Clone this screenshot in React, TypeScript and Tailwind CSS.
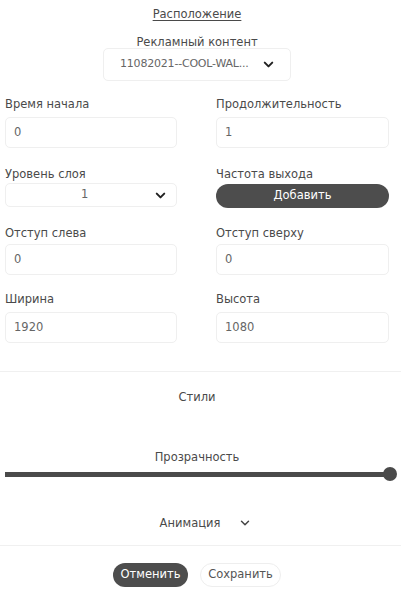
import React from 'react';
import { ChevronDown } from 'lucide-react';

const font = { fontFamily: '"DejaVu Sans", "Noto Sans", sans-serif' };

const Field = ({ label, value, labelGap }: { label: string; value: string; labelGap: string }) => (
  <div className="flex flex-col">
    <span className={`text-[11.5px] leading-4 text-[#4a4a4a] ${labelGap}`}>{label}</span>
    <div className="h-[31px] border border-[#efefef] rounded-[5px] flex items-center pl-[8px] text-[11.5px] text-[#666]">
      {value}
    </div>
  </div>
);

const App: React.FC = () => {
  return (
    <div className="w-[401px] h-[599px] bg-white overflow-hidden" style={font}>
      <div className="w-[394px] flex flex-col items-center">
        <span className="mt-[6px] text-[11.5px] leading-4 text-[#4a4a4a] underline underline-offset-2">Расположение</span>
        <span className="mt-[13px] text-[11.5px] leading-[14px] text-[#4a4a4a]">Рекламный контент</span>
        <div className="mt-[-1px] w-[188px] h-[33px] border border-[#efefef] rounded-[5px] flex items-center pl-[16px] pr-[14px] justify-between">
          <span className="text-[11px] text-[#666] tracking-[-0.2px]">11082021--COOL-WAL...</span>
          <ChevronDown size={15} strokeWidth={3.2} className="text-[#222]" />
        </div>
      </div>

      <div className="pl-[5px] mt-[15px] grid grid-cols-[172px_173px] gap-x-[39px]">
        <Field label="Время начала" value="0" labelGap="mb-[5px]" />
        <Field label="Продолжительность" value="1" labelGap="mb-[5px]" />

        <div className="flex flex-col mt-[18px]">
          <span className="text-[11.5px] leading-4 text-[#4a4a4a] mb-[1px]">Уровень слоя</span>
          <div className="h-[24px] border border-[#efefef] rounded-[5px] flex items-center justify-between pl-[75px] pr-[8px]">
            <span className="text-[11.5px] text-[#666]">1</span>
            <ChevronDown size={15} strokeWidth={3.2} className="text-[#222]" />
          </div>
        </div>
        <div className="flex flex-col mt-[18px]">
          <span className="text-[11.5px] leading-4 text-[#4a4a4a] mb-[2px]">Частота выхода</span>
          <button className="h-[24px] rounded-full bg-[#4d4d4d] text-white text-[11.5px] flex items-center justify-center">
            Добавить
          </button>
        </div>

        <div className="mt-[17px]">
          <Field label="Отступ слева" value="0" labelGap="mb-[3px]" />
        </div>
        <div className="mt-[17px]">
          <Field label="Отступ сверху" value="0" labelGap="mb-[3px]" />
        </div>

        <div className="mt-[16px]">
          <Field label="Ширина" value="1920" labelGap="mb-[5px]" />
        </div>
        <div className="mt-[16px]">
          <Field label="Высота" value="1080" labelGap="mb-[5px]" />
        </div>
      </div>

      <div className="mt-[28px] h-px bg-[#f0f0f0]" />

      <div className="w-[394px] flex flex-col items-center">
        <span className="mt-[17px] text-[11.5px] leading-4 text-[#4a4a4a]">Стили</span>
        <span className="mt-[44px] text-[11.5px] leading-4 text-[#4a4a4a]">Прозрачность</span>
      </div>

      <div className="relative mt-[2px] ml-[5px] w-[385px] h-[14px] flex items-center">
        <div className="w-full h-[5px] bg-[#4a4a4a]" />
        <div className="absolute right-[-7px] top-0 w-[14px] h-[14px] rounded-full bg-[#4a4a4a]" />
      </div>

      <div className="w-[394px] mt-[34px] flex items-center justify-center gap-[18px] pl-[18px]">
        <span className="text-[11.5px] leading-4 text-[#4a4a4a]">Анимация</span>
        <ChevronDown size={14} strokeWidth={2.5} className="text-[#444]" />
      </div>

      <div className="mt-[14px] h-px bg-[#f0f0f0]" />

      <div className="w-[394px] mt-[17px] flex justify-center gap-[12px]">
        <button className="w-[75px] h-[24px] rounded-full bg-[#4d4d4d] text-white text-[11.5px]">Отменить</button>
        <button className="w-[81px] h-[24px] rounded-full bg-white border border-[#eeeeee] text-[#555] text-[11.5px]">Сохранить</button>
      </div>
    </div>
  );
};

export default App;
